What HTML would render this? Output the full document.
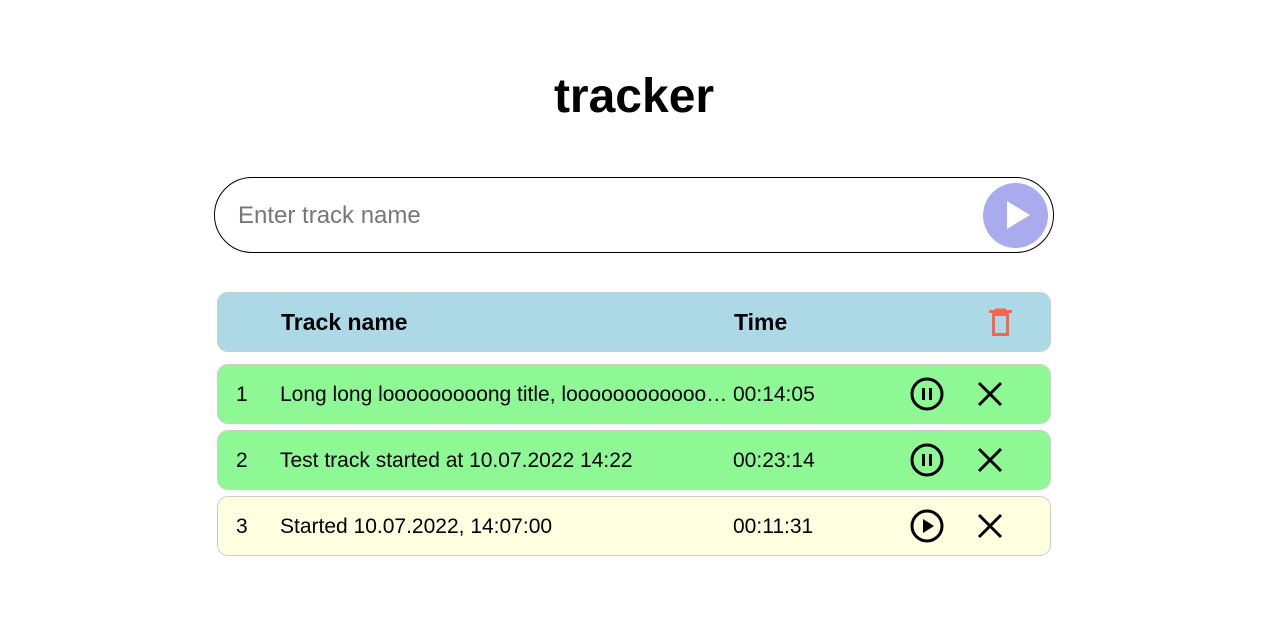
<!DOCTYPE html>
<html><head><style>
body{margin:0;background:#fff;font-family:"Liberation Sans",Arial,sans-serif;width:1280px;height:641px;overflow:hidden;position:relative}
h1{position:absolute;left:0;width:1268px;text-align:center;top:69px;margin:0;font-size:48px;font-weight:bold;line-height:56px}
.inp{position:absolute;left:214px;top:177px;width:838px;height:74px;border:1px solid #000;border-radius:38px;box-sizing:content-box}
.inp span{position:absolute;left:23px;top:24px;font-size:24px;color:#777}
.btn{position:absolute;left:983px;top:183px;width:65px;height:65px;border-radius:50%;background:#aaaaee}
.row{position:absolute;left:217px;width:832px;height:58px;border:1px solid #ccc;border-radius:11px;font-size:21px}
.row div{position:absolute;top:18px;white-space:nowrap}
.h{background:#add8e6;font-weight:bold;font-size:23px}
.g{background:#8ef894}
.y{background:#ffffe0}
svg{position:absolute}
</style></head><body>
<h1>tracker</h1>
<div class="inp"><span>Enter track name</span></div>
<div class="btn"><svg width="65" height="65" style="left:0;top:0"><polygon points="24,18 24,46 47,32" fill="#fff"/></svg></div>

<div class="row h" style="top:292px"><div style="left:63px;top:16px">Track name</div><div style="left:516px;top:16px">Time</div>
<svg width="30" height="34" style="left:767px;top:13px"><path d="M4 5.5h23M10 4h11" stroke="#ff6347" stroke-width="3" fill="none"/><rect x="8.5" y="8.5" width="14" height="20" stroke="#ff6347" stroke-width="3" fill="none"/></svg></div>

<div class="row g" style="top:364px"><div style="left:18px">1</div><div style="left:62px;width:450px;overflow:hidden;text-overflow:ellipsis">Long long looooooooong title, looooooooooooooong</div><div style="left:515px">00:14:05</div>
<svg width="36" height="36" style="left:691px;top:11px"><circle cx="18" cy="18" r="15" stroke="#000" stroke-width="3" fill="none"/><path d="M14.5 12v12M21.5 12v12" stroke="#000" stroke-width="3"/></svg>
<svg width="30" height="30" style="left:757px;top:14px"><path d="M4 4L26 26M26 4L4 26" stroke="#000" stroke-width="3"/></svg></div>

<div class="row g" style="top:430px"><div style="left:18px">2</div><div style="left:62px">Test track started at 10.07.2022 14:22</div><div style="left:515px">00:23:14</div>
<svg width="36" height="36" style="left:691px;top:11px"><circle cx="18" cy="18" r="15" stroke="#000" stroke-width="3" fill="none"/><path d="M14.5 12v12M21.5 12v12" stroke="#000" stroke-width="3"/></svg>
<svg width="30" height="30" style="left:757px;top:14px"><path d="M4 4L26 26M26 4L4 26" stroke="#000" stroke-width="3"/></svg></div>

<div class="row y" style="top:496px"><div style="left:18px">3</div><div style="left:62px">Started 10.07.2022, 14:07:00</div><div style="left:515px">00:11:31</div>
<svg width="36" height="36" style="left:691px;top:11px"><circle cx="18" cy="18" r="15" stroke="#000" stroke-width="3" fill="none"/><polygon points="14,11 14,25 25,18" fill="#000"/></svg>
<svg width="30" height="30" style="left:757px;top:14px"><path d="M4 4L26 26M26 4L4 26" stroke="#000" stroke-width="3"/></svg></div>
</body></html>
